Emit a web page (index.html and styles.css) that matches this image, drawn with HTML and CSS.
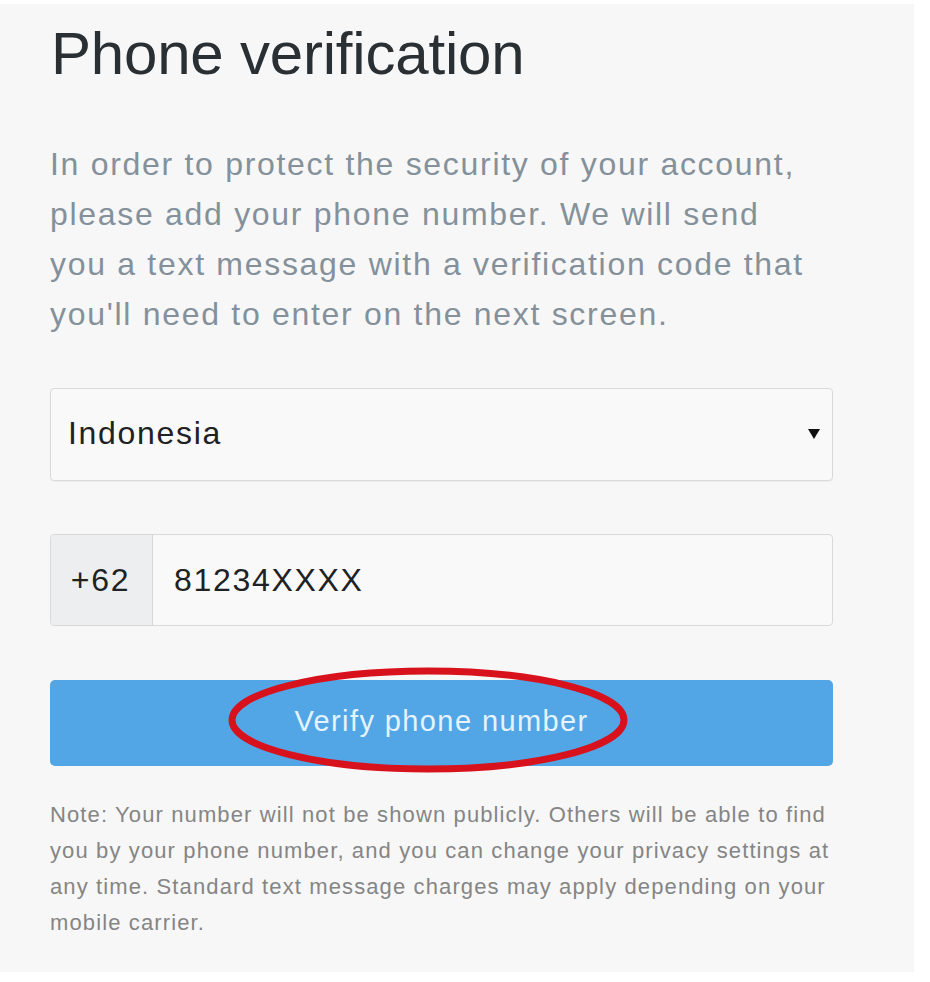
FILE: index.html
```html
<!DOCTYPE html>
<html lang="en">
<head>
<meta charset="utf-8">
<title>Phone verification</title>
<link rel="stylesheet" href="styles.css">
</head>
<body>
<main class="panel">
  <h1 class="title">Phone verification</h1>
  <p class="intro">In order to protect the security of your account, please add your phone number. We will send you a text message with a verification code that you'll need to enter on the next screen.</p>
  <div class="select">
    <span class="select-value">Indonesia</span>
    <svg class="select-arrow" width="12" height="10" viewBox="0 0 12 10" aria-hidden="true"><polygon points="0,0 12,0 6,10" fill="#111"/></svg>
  </div>
  <div class="phone">
    <span class="phone-prefix">+62</span>
    <span class="phone-number">81234XXXX</span>
  </div>
  <div class="button-wrap">
    <button class="verify" type="button">Verify phone number</button>
    <svg class="circle-mark" width="404" height="108" viewBox="0 0 404 108" aria-hidden="true">
      <ellipse cx="200" cy="53" rx="196" ry="49" fill="none" stroke="#d8121c" stroke-width="7"/>
    </svg>
  </div>
  <p class="note">Note: Your number will not be shown publicly. Others will be able to find you by your phone number, and you can change your privacy settings at any time. Standard text message charges may apply depending on your mobile carrier.</p>
</main>
</body>
</html>
```
FILE: styles.css
```css
html, body {
  margin: 0;
  padding: 0;
  background: #ffffff;
}

body {
  font-family: "Liberation Sans", Arial, sans-serif;
}

.panel {
  box-sizing: border-box;
  width: 914px;
  height: 968px;
  margin-top: 4px;
  background: #f7f7f7;
  padding: 20px 81px 0 50px;
  display: flex;
  flex-direction: column;
}

.title {
  margin: 0 0 0 1px;
  font-size: 60px;
  line-height: 60px;
  font-weight: normal;
  color: #292f33;
  letter-spacing: -0.2px;
}

.intro {
  margin: 55px 0 0 0;
  max-width: 770px;
  font-size: 32px;
  line-height: 50px;
  color: #84919b;
  letter-spacing: 1.7px;
}

.select {
  box-sizing: border-box;
  margin-top: 49px;
  height: 93px;
  border: 1px solid #d9d9d9;
  border-radius: 4px;
  background: #f9f9f9;
  display: flex;
  align-items: center;
  justify-content: space-between;
  padding: 0 12px 0 17px;
  box-shadow: 0 1px 1px rgba(0, 0, 0, 0.04);
}

.select-value,
.phone-prefix,
.phone-number {
  font-size: 32px;
  letter-spacing: 1.7px;
  color: #1e2225;
}

.select-value {
  padding-bottom: 2px;
}

.select-arrow {
  display: block;
  margin-bottom: 2px;
}

.phone {
  box-sizing: border-box;
  margin-top: 53px;
  height: 92px;
  border: 1px solid #d9d9d9;
  border-radius: 4px;
  background: #f9f9f9;
  display: flex;
  align-items: stretch;
  overflow: hidden;
}

.phone-prefix {
  box-sizing: border-box;
  width: 102px;
  background: #eceeef;
  border-right: 1px solid #d6d6d6;
  display: flex;
  align-items: center;
  justify-content: center;
  padding-right: 2px;
}

.phone-number {
  display: flex;
  align-items: center;
  padding-left: 21px;
}

.button-wrap {
  position: relative;
  margin-top: 54px;
}

.verify {
  display: block;
  box-sizing: border-box;
  width: 100%;
  height: 86px;
  border: none;
  border-radius: 5px;
  background: #52a6e6;
  color: #e4f3fd;
  font-family: "Liberation Sans", Arial, sans-serif;
  font-size: 29px;
  letter-spacing: 1.4px;
  padding: 0 0 3px 0;
}

.circle-mark {
  position: absolute;
  left: 178px;
  top: -13px;
}

.note {
  margin: 31px 0 0 0;
  font-size: 22px;
  line-height: 36px;
  color: #858585;
  letter-spacing: 1.12px;
}
```
